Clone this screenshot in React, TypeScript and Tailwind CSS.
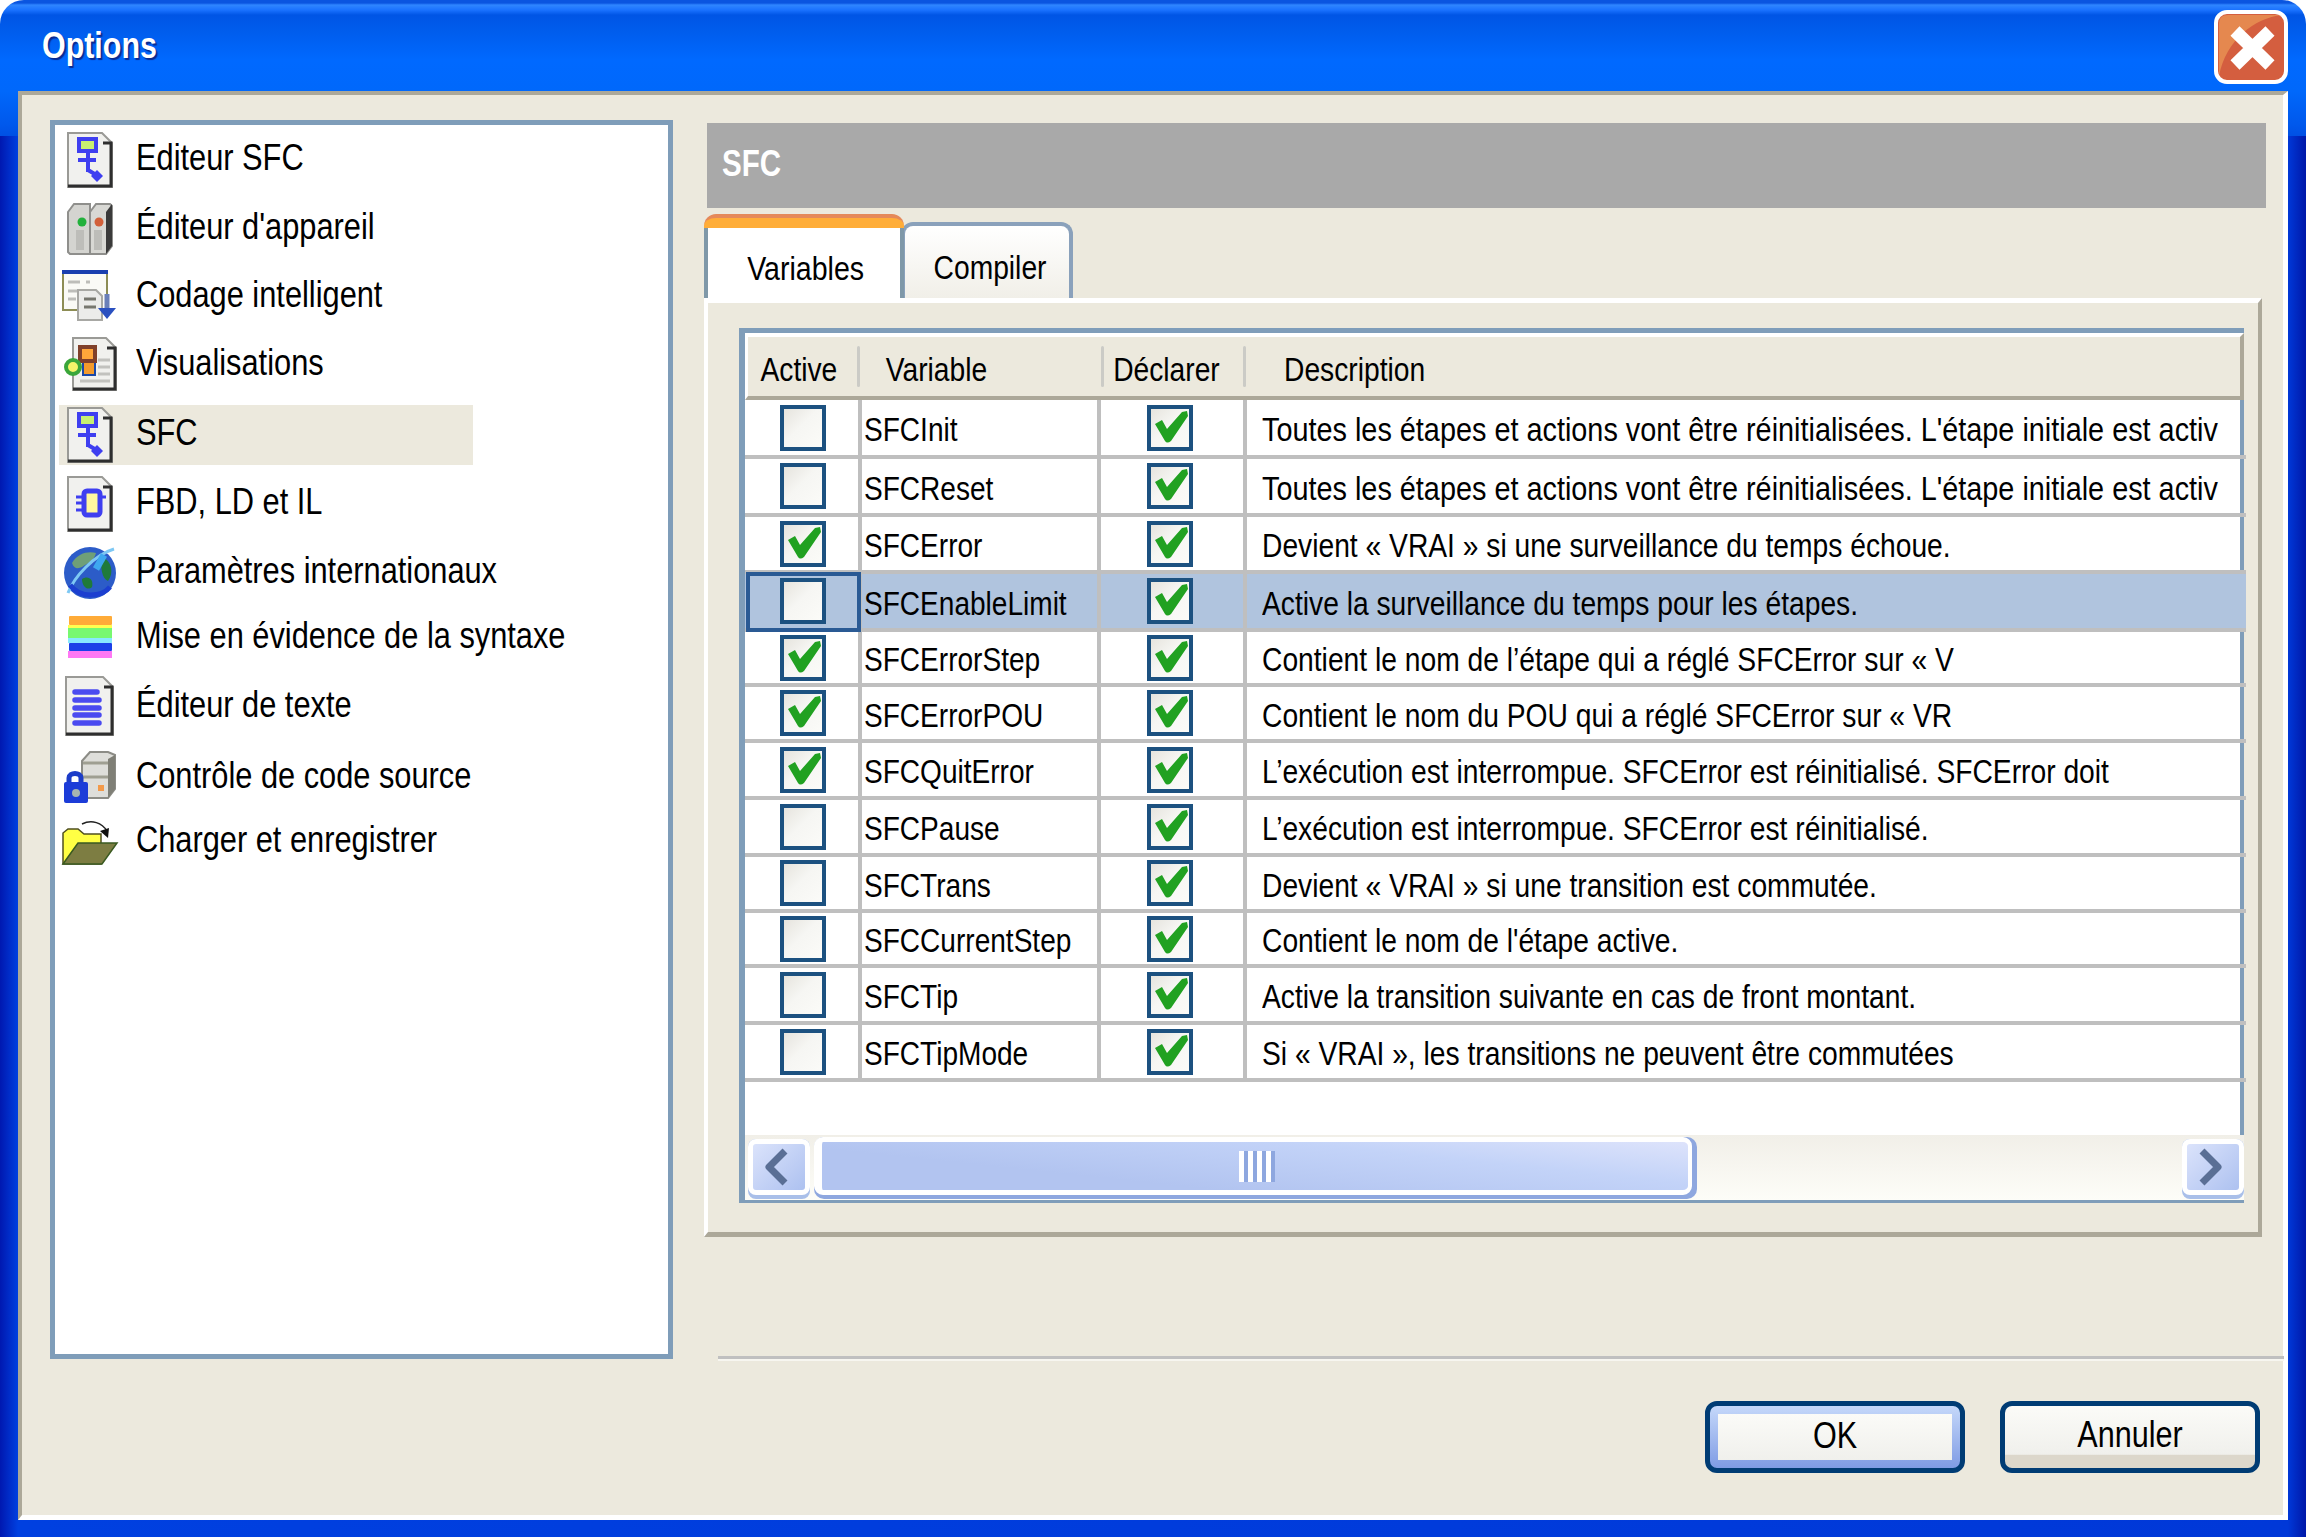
import type { ReactNode } from "react";

const Doc = ({ children, x = 8, w = 44, y = 3, h = 54 }: { children?: ReactNode; x?: number; w?: number; y?: number; h?: number }) => (
  <>
    <path d={`M${x} ${y + h}V${y}H${x + w - 10}L${x + w} ${y + 10}V${y + h}Z`} fill="#f1f1ee" stroke="#9a9a96" strokeWidth="2" />
    <path d={`M${x + w - 9} ${y + 10}H${x + w - 1}V${y + h - 1}H${x}`} fill="none" stroke="#2e2e2e" strokeWidth="3" />
    {children}
  </>
);

const SfcIcon = () => (
  <svg width="60" height="60" viewBox="0 0 60 60" className="shrink-0">
    <Doc>
      <rect x="19" y="9" width="17" height="12" fill="#c8f070" stroke="#3f3ff0" strokeWidth="4" />
      <path d="M28 21V42M18 30H36M28 40L38 46" fill="none" stroke="#3f3ff0" strokeWidth="4" />
      <path d="M37 40L43 46L37 52L31 46Z" fill="#3f3ff0" />
    </Doc>
  </svg>
);

const DeviceIcon = () => (
  <svg width="60" height="60" viewBox="0 0 60 60" className="shrink-0">
    <path d="M8 14L14 6H30V56H10L8 54Z" fill="#d4d4d0" stroke="#8f8f8c" strokeWidth="2" />
    <path d="M30 14L36 6H50L52 8V48L46 56H30Z" fill="#d8d8d4" stroke="#8f8f8c" strokeWidth="2" />
    <path d="M46 14L52 6V48L46 56Z" fill="#3a3a3a" />
    <rect x="16" y="32" width="8" height="20" fill="#bdbdb9" />
    <rect x="34" y="32" width="8" height="20" fill="#bdbdb9" />
    <circle cx="22" cy="24" r="4.5" fill="#22b13c" />
    <circle cx="39" cy="24" r="4.5" fill="#d2603a" />
  </svg>
);

const CodingIcon = () => (
  <svg width="60" height="60" viewBox="0 0 60 60" className="shrink-0">
    <rect x="3" y="5" width="44" height="39" fill="#fafaf6" stroke="#8d8d55" strokeWidth="2" />
    <rect x="2" y="4" width="46" height="4" fill="#1a3fb0" />
    <path d="M8 16H20M26 16H30M8 25H18M8 33H16" stroke="#bdbdb9" strokeWidth="3" />
    <path d="M18 24H36L42 30V54H18Z" fill="#ececea" stroke="#a8a8a4" strokeWidth="2" />
    <path d="M24 33H36M24 41H36" stroke="#77776f" strokeWidth="3" />
    <path d="M47 28V42" stroke="#6a7fb8" strokeWidth="5" />
    <path d="M38 42H56L47 53Z" fill="#2a50c0" />
  </svg>
);

const VisuIcon = () => (
  <svg width="60" height="60" viewBox="0 0 60 60" className="shrink-0">
    <Doc x={13} w={43} y={4} h={52}>
      <path d="M38 26H50M38 33H50M38 40H50M20 47H50" stroke="#c2c2be" strokeWidth="3" />
    </Doc>
    <rect x="23" y="28" width="12" height="13" fill="#f39a2c" stroke="#1a48a8" strokeWidth="2" />
    <rect x="20" y="13" width="15" height="14" fill="#ffa63a" stroke="#80402a" strokeWidth="4" />
    <circle cx="13" cy="33" r="7" fill="#f4f46a" stroke="#3aa63a" strokeWidth="4" />
  </svg>
);

const FbdIcon = () => (
  <svg width="60" height="60" viewBox="0 0 60 60" className="shrink-0">
    <Doc>
      <rect x="24" y="17" width="16" height="24" rx="3" fill="#fff7a0" stroke="#3f3ff0" strokeWidth="5" />
      <path d="M16 23H24M16 29H24M16 36H24M40 23H46" stroke="#3f3ff0" strokeWidth="3" />
    </Doc>
  </svg>
);

const GlobeIcon = () => (
  <svg width="60" height="60" viewBox="0 0 60 60" className="shrink-0">
    <ellipse cx="30" cy="30" rx="26" ry="26" fill="#2c5cc8" />
    <path d="M12 20C18 10 28 8 36 10C34 18 28 20 22 24C18 26 14 26 12 20Z" fill="#6f9f78" />
    <path d="M42 14C52 18 54 30 48 38C42 36 40 24 42 14Z" fill="#1f7a3a" />
    <path d="M22 36C28 32 34 36 32 44C28 48 22 44 22 36Z" fill="#1f7a3a" />
    <path d="M8 50C14 34 34 12 54 6" fill="none" stroke="#7ec8f4" strokeWidth="3" />
    <path d="M36 26L44 12" stroke="#3ea8f0" strokeWidth="7" />
    <path d="M10 42C20 56 42 54 50 44" fill="none" stroke="#1c3fd0" strokeWidth="5" />
  </svg>
);

const SyntaxIcon = () => (
  <svg width="60" height="60" viewBox="0 0 60 60" className="shrink-0">
    <rect x="9" y="9" width="43" height="9" rx="1" fill="#ffab38" />
    <rect x="8" y="18" width="44" height="3" fill="#ffff50" />
    <rect x="8" y="21" width="44" height="10" fill="#78f870" />
    <rect x="8" y="31" width="44" height="5" fill="#88e8ff" />
    <rect x="9" y="36" width="43" height="8" rx="1" fill="#1c40e8" />
    <rect x="8" y="44" width="44" height="7" fill="#ff78f4" />
  </svg>
);

const TextIcon = () => (
  <svg width="60" height="60" viewBox="0 0 60 60" className="shrink-0">
    <Doc x={6} w={47} y={1} h={58}>
      <path d="M15 16H37M15 24H39M15 32H39M15 39H39M15 47H39" stroke="#4a4af0" strokeWidth="5.5" strokeLinecap="round" />
    </Doc>
  </svg>
);

const SourceIcon = () => (
  <svg width="60" height="60" viewBox="0 0 60 60" className="shrink-0">
    <path d="M22 14L30 5H48L55 8V42L48 51H22Z" fill="#dededa" stroke="#8c8c86" strokeWidth="2" />
    <path d="M48 12L55 8V42L48 51Z" fill="#7f7f76" />
    <path d="M23 16H48M23 30H48" stroke="#9f9f92" strokeWidth="3" />
    <rect x="38" y="38" width="6" height="6" fill="#f39a4a" />
    <path d="M9 36V31C9 25 21 25 21 31V36" fill="none" stroke="#1c3cc8" strokeWidth="5" />
    <rect x="4" y="35" width="24" height="21" rx="2" fill="#1c3cd8" />
    <circle cx="16" cy="46" r="4" fill="#a8b4b0" />
  </svg>
);

const FolderIcon = () => (
  <svg width="60" height="60" viewBox="0 0 60 60" className="shrink-0">
    <path d="M3 53V22L8 18H18L24 23H41V53Z" fill="#ffff44" stroke="#4f4f20" strokeWidth="1.5" />
    <path d="M3 53L18 32H57L42 53Z" fill="#7d7d42" stroke="#3a5a20" strokeWidth="1.5" />
    <path d="M22 13C32 8 42 12 47 20" fill="none" stroke="#222" strokeWidth="1.5" />
    <path d="M40 20L49 17L48 27Z" fill="#111" />
  </svg>
);

const navItems = [
  { label: "Editeur SFC", icon: <SfcIcon />, gap: "mt-[5px]", pad: "pb-[5px]" },
  { label: "Éditeur d'appareil", icon: <DeviceIcon />, gap: "mt-2", pad: "pb-[3px]" },
  { label: "Codage intelligent", icon: <CodingIcon />, gap: "mt-2", pad: "pb-[3px]" },
  { label: "Visualisations", icon: <VisuIcon />, gap: "mt-2", pad: "pb-[3px]" },
  { label: "SFC", icon: <SfcIcon />, gap: "mt-[11px]", pad: "pb-[5px]", selected: true },
  { label: "FBD, LD et IL", icon: <FbdIcon />, gap: "mt-[9px]", pad: "pb-[5px]" },
  { label: "Paramètres internationaux", icon: <GlobeIcon />, gap: "mt-[9px]", pad: "pb-[5px]" },
  { label: "Mise en évidence de la syntaxe", icon: <SyntaxIcon />, gap: "mt-1", pad: "pb-[3px]" },
  { label: "Éditeur de texte", icon: <TextIcon />, gap: "mt-[9px]", pad: "pb-[3px]" },
  { label: "Contrôle de code source", icon: <SourceIcon />, gap: "mt-[11px]", pad: "pb-[2px]" },
  { label: "Charger et enregistrer", icon: <FolderIcon />, gap: "mt-1", pad: "pb-[2px]" },
];

const rows = [
  { name: "SFCInit", h: "h-[59px]", active: false, wide: true, desc: "Toutes les étapes et actions vont être réinitialisées. L'étape initiale est activ" },
  { name: "SFCReset", h: "h-[58px]", active: false, wide: true, desc: "Toutes les étapes et actions vont être réinitialisées. L'étape initiale est activ" },
  { name: "SFCError", h: "h-[57px]", active: true, desc: "Devient « VRAI » si une surveillance du temps échoue." },
  { name: "SFCEnableLimit", h: "h-[58px]", active: false, selected: true, desc: "Active la surveillance du temps pour les étapes." },
  { name: "SFCErrorStep", h: "h-[55px]", active: true, desc: "Contient le nom de l’étape qui a réglé SFCError sur « V" },
  { name: "SFCErrorPOU", h: "h-[56px]", active: true, desc: "Contient le nom du POU qui a réglé SFCError sur « VR" },
  { name: "SFCQuitError", h: "h-[57px]", active: true, desc: "L’exécution est interrompue. SFCError est réinitialisé. SFCError doit" },
  { name: "SFCPause", h: "h-[57px]", active: false, desc: "L’exécution est interrompue. SFCError est réinitialisé." },
  { name: "SFCTrans", h: "h-[56px]", active: false, desc: "Devient « VRAI » si une transition est commutée." },
  { name: "SFCCurrentStep", h: "h-[55px]", active: false, desc: "Contient le nom de l'étape active." },
  { name: "SFCTip", h: "h-[57px]", active: false, desc: "Active la transition suivante en cas de front montant." },
  { name: "SFCTipMode", h: "h-[57px]", active: false, desc: "Si « VRAI », les transitions ne peuvent être commutées" },
];

function Checkbox({ checked }: { checked: boolean }) {
  return (
    <div className="shrink-0 w-[46px] h-[46px] border-[4px] border-[#1c5180] bg-[linear-gradient(135deg,#e6e4de,#f6f6f3_45%,#fbfbf8)]">
      {checked && (
        <svg width="46" height="46" viewBox="0 0 46 46" className="-m-[4px] block">
          <path d="M8 19L15 15L20 24L35 7L40 6L41 11L24 36Q20 39 18 36Z" fill="#21a121" />
        </svg>
      )}
    </div>
  );
}

function HeaderCell({ label, pad, width }: { label: string; pad: string; width: string }) {
  return (
    <div className={`shrink-0 flex items-center justify-between ${width}`}>
      <span className={`inline-block origin-left scale-x-[0.83] whitespace-nowrap text-[34px] leading-none pt-[4px] ${pad}`}>{label}</span>
      <div className="h-[41px] w-[3px] rounded bg-[#cbcbc6]" />
    </div>
  );
}

function ScrollButton({ direction }: { direction: "left" | "right" }) {
  return (
    <div className="h-[60px] rounded-[8px] bg-[#a9bfe9] pb-[4px]">
      <div className="h-[56px] rounded-[8px] border-x-[5px] border-y-[5px] border-white bg-[linear-gradient(135deg,#dbe3fb,#adc1f0)] flex items-center justify-center w-[62px]">
        <svg width="30" height="38" viewBox="0 0 30 38" className={direction === "left" ? "-ml-[6px]" : "-ml-[4px]"}>
          {direction === "left" ? (
            <path d="M24 3L8 19L24 35" fill="none" stroke="#5a6f95" strokeWidth="7" strokeLinejoin="round" />
          ) : (
            <path d="M6 3L22 19L6 35" fill="none" stroke="#5a6f95" strokeWidth="7" strokeLinejoin="round" />
          )}
        </svg>
      </div>
    </div>
  );
}

export default function App() {
  return (
    <div className="w-[2306px] h-[1537px] rounded-t-[24px] overflow-hidden flex flex-col font-['Liberation_Sans',sans-serif] text-black bg-no-repeat bg-[linear-gradient(180deg,#0a55e0_0px,#0a55e0_3px,#2f86ff_5px,#1a72ff_10px,#0055e5_15px,#005cec_30px,#0069ff_60px,#0068fb_91px,#0058ec_125px,#0050e4_136px,#0050e4_136px,transparent_136px),linear-gradient(90deg,#0018b0_0px,#0040e0_18px,#0038d8_2288px,#0018a8_2306px)]">
      {/* title bar */}
      <div className="h-[91px] shrink-0 flex items-center justify-between pl-[42px] pr-[18px]">
        <span className="inline-block origin-left scale-x-[0.845] text-[36px] leading-none font-bold text-white [text-shadow:2px_2px_1px_#0a2a90]">Options</span>
        <svg width="74" height="74" viewBox="0 0 74 74" className="mt-[2px]">
          <rect x="2" y="2" width="70" height="70" rx="11" fill="#d45e3f" stroke="#ffffff" strokeWidth="4" />
          <path d="M5 66V14C5 8 8 5 14 5H68C40 8 12 30 5 66Z" fill="#e5884f" />
          <path d="M21 21L56 55M56 21L21 55" stroke="#ffffff" strokeWidth="13" />
        </svg>
      </div>

      {/* client area */}
      <div className="mx-[18px] h-[1429px] bg-[#ece9dd] border-l-4 border-t-4 border-[#aca899] border-r-[5px] border-r-white border-b-[5px] border-b-white flex pl-[28px] pt-[25px]">
        {/* option list */}
        <div className="w-[623px] h-[1239px] shrink-0 border-[5px] border-[#7f9db9] bg-white pl-[4px] flex flex-col">
          {navItems.map((item) => (
            <div key={item.label} className={`${item.gap} w-[414px] h-[60px] shrink-0 flex items-center pl-[1px] ${item.selected ? "bg-[#ece9dd]" : ""}`}>
              {item.icon}
              <span className={`ml-[16px] inline-block origin-left scale-x-[0.855] whitespace-nowrap text-[36px] leading-none ${item.pad}`}>{item.label}</span>
            </div>
          ))}
        </div>

        <div className="ml-[31px] w-[1579px] shrink-0 flex flex-col">
          {/* section heading */}
          <div className="ml-[3px] mt-[3px] w-[1559px] h-[85px] bg-[#a9a9a9] flex items-center pl-[15px] pb-[3px]">
            <span className="inline-block origin-left scale-x-[0.82] text-[36px] leading-none font-bold text-white">SFC</span>
          </div>

          {/* tabs */}
          <div className="mt-[6px] h-[84px] flex items-end">
            <div className="relative z-10 w-[200px] h-[84px] flex flex-col">
              <div className="h-[14px] rounded-t-[12px] border-t-4 border-[#e5895a] bg-[#ffad38]" />
              <div className="flex-1 border-x-4 border-[#7f98a8] bg-white flex items-center justify-center pt-[10px] pl-[3px]">
                <span className="inline-block scale-x-[0.84] text-[34px] leading-none whitespace-nowrap">Variables</span>
              </div>
            </div>
            <div className="-ml-[3px] w-[172px] h-[76px] rounded-t-[12px] border-x-4 border-t-4 border-[#8aa1bb] bg-[linear-gradient(180deg,#ffffff,#f1efe8)] flex items-center justify-center pt-[10px] pl-[6px]">
              <span className="inline-block scale-x-[0.83] text-[34px] leading-none whitespace-nowrap">Compiler</span>
            </div>
          </div>

          {/* tab pane */}
          <div className="w-[1558px] h-[939px] shrink-0 border-l-4 border-t-[5px] border-white border-r-4 border-r-[#aca899] border-b-[5px] border-b-[#aca899] pl-[31px] pt-[25px]">
            <div className="w-[1505px] h-[875px] border-t-[5px] border-l-[6px] border-r-4 border-b-[3px] border-[#7f9db9] bg-white flex flex-col">
              {/* table header */}
              <div className="-mr-[4px] h-[67px] shrink-0 flex items-center bg-[#ece9dd] border-t-4 border-l-[3px] border-white border-r-4 border-r-[#aca899] border-b-4 border-b-[#aca899]">
                <HeaderCell label="Active" pad="pl-[15px]" width="w-[112px]" />
                <HeaderCell label="Variable" pad="pl-[31px]" width="w-[244px]" />
                <HeaderCell label="Déclarer" pad="pl-[11px]" width="w-[142px]" />
                <span className="ml-[38px] pt-[4px] inline-block origin-left scale-x-[0.83] text-[34px] leading-none">Description</span>
              </div>

              {/* table rows */}
              {rows.map((row) => (
                <div key={row.name} className={`${row.h} -mr-[6px] shrink-0 flex border-b-4 border-[#bfbfbf] ${row.selected ? "bg-[#b0c4de]" : ""}`}>
                  <div className="relative shrink-0 w-[117px] border-r-4 border-[#bfbfbf] flex items-center justify-center pl-[3px]">
                    <Checkbox checked={row.active} />
                    {row.selected && <div className="absolute -top-[2px] -bottom-[4px] left-[1px] -right-[3px] border-4 border-[#2a5a94]" />}
                  </div>
                  <div className="shrink-0 w-[239px] border-r-4 border-[#bfbfbf] flex items-center pl-[2px] pt-[3px]">
                    <span className="inline-block origin-left scale-x-[0.825] whitespace-nowrap text-[34px] leading-none">{row.name}</span>
                  </div>
                  <div className="shrink-0 w-[146px] border-r-4 border-[#bfbfbf] flex items-center justify-center pr-[4px]">
                    <Checkbox checked />
                  </div>
                  <div className="flex-1 min-w-0 flex items-center pl-[15px] pt-[3px]">
                    <span className={`inline-block origin-left whitespace-nowrap text-[34px] leading-none ${row.wide ? "scale-x-[0.848]" : "scale-x-[0.83]"}`}>{row.desc}</span>
                  </div>
                </div>
              ))}

              <div className="flex-1" />

              {/* horizontal scrollbar */}
              <div className="-mr-[4px] h-[65px] shrink-0 flex items-start bg-[linear-gradient(180deg,#f1efe8,#fdfdf8)]">
                <div className="ml-[3px] mt-[4px]"><ScrollButton direction="left" /></div>
                <div className="ml-[4px] mt-[2px] w-[883px] h-[62px] rounded-[10px] bg-[#8ea7df] pr-[5px] pb-[4px]">
                  <div className="h-[58px] rounded-[9px] border-l-[8px] border-r-[4px] border-y-[5px] border-white bg-[linear-gradient(186deg,#dde3fb_0%,#c3d3f8_30%,#b2c4f0_70%)] flex items-center justify-center pl-[4px]">
                    <div className="flex h-[31px]">
                      <div className="w-[9px] bg-[linear-gradient(90deg,#ffffff_50%,#8ea7df_50%)]" />
                      <div className="w-[9px] bg-[linear-gradient(90deg,#ffffff_50%,#8ea7df_50%)]" />
                      <div className="w-[9px] bg-[linear-gradient(90deg,#ffffff_50%,#8ea7df_50%)]" />
                      <div className="w-[9px] bg-[linear-gradient(90deg,#ffffff_50%,#8ea7df_50%)]" />
                    </div>
                  </div>
                </div>
                <div className="ml-auto mt-[4px]"><ScrollButton direction="right" /></div>
              </div>
            </div>
          </div>

          {/* separator */}
          <div className="mt-[119px] h-[5px] w-[1566px] ml-[14px] border-t-[3px] border-[#c0c0c0] border-b-2 border-b-[#f7f6f0]" />

          {/* dialog buttons */}
          <div className="mt-[40px] flex justify-end gap-[35px] pr-[23px]">
            <div className="w-[260px] h-[72px] rounded-[12px] border-[5px] border-[#003c74] bg-[linear-gradient(180deg,#c5d8fa,#7f9be4)] p-[8px]">
              <div className="h-full bg-[linear-gradient(180deg,#fbfbf8,#f0f0ec)] flex items-center justify-center pb-[3px]">
                <span className="inline-block scale-x-[0.85] text-[36px] leading-none">OK</span>
              </div>
            </div>
            <div className="w-[260px] h-[72px] rounded-[12px] border-[5px] border-[#003c74] bg-[linear-gradient(180deg,#fbfbf8_0%,#f0f0ec_78%,#dcd7cb_79%,#dcd7cb_100%)] flex items-center justify-center pb-[4px]">
              <span className="inline-block scale-x-[0.85] text-[36px] leading-none">Annuler</span>
            </div>
          </div>
        </div>
      </div>
    </div>
  );
}
